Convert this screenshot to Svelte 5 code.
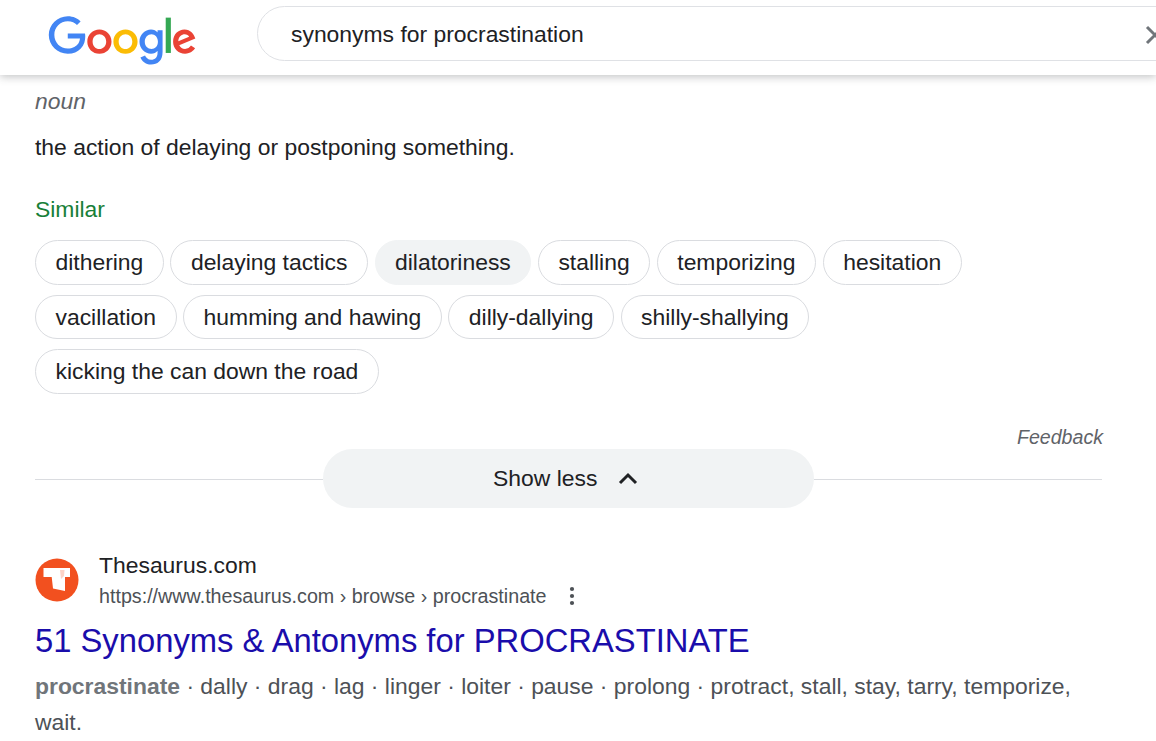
<script>
  const chipRows = [
    ["dithering", "delaying tactics", "dilatoriness", "stalling", "temporizing", "hesitation"],
    ["vacillation", "humming and hawing", "dilly-dallying", "shilly-shallying"],
    ["kicking the can down the road"],
  ];
  const active = "dilatoriness";
</script>

<header class="topbar">
  <svg class="logo" viewBox="0 0 272 92" aria-label="Google">
    <path fill="#EA4335" d="M115.75 47.18c0 12.77-9.99 22.18-22.25 22.18s-22.25-9.41-22.25-22.18C71.25 34.32 81.24 25 93.5 25s22.25 9.32 22.25 22.18zm-9.74 0c0-7.98-5.79-13.44-12.51-13.44S80.99 39.2 80.99 47.18c0 7.9 5.79 13.44 12.51 13.44s12.51-5.55 12.51-13.44z"/>
    <path fill="#FBBC05" d="M163.75 47.18c0 12.77-9.99 22.18-22.25 22.18s-22.25-9.41-22.25-22.18c0-12.85 9.99-22.18 22.25-22.18s22.25 9.32 22.25 22.18zm-9.74 0c0-7.98-5.79-13.44-12.51-13.44s-12.51 5.46-12.51 13.44c0 7.9 5.79 13.44 12.51 13.44s12.51-5.55 12.51-13.44z"/>
    <path fill="#4285F4" d="M209.75 26.34v39.82c0 16.38-9.66 23.07-21.08 23.07-10.75 0-17.22-7.19-19.66-13.07l8.48-3.53c1.51 3.61 5.21 7.87 11.17 7.87 7.31 0 11.84-4.51 11.84-13v-3.19h-.34c-2.18 2.69-6.38 5.04-11.68 5.04-11.09 0-21.25-9.66-21.25-22.09 0-12.52 10.16-22.26 21.25-22.26 5.29 0 9.49 2.35 11.68 4.96h.34v-3.61h9.25zm-8.56 20.92c0-7.81-5.21-13.52-11.84-13.52-6.72 0-12.35 5.71-12.35 13.52 0 7.73 5.63 13.36 12.35 13.36 6.63 0 11.84-5.63 11.84-13.36z"/>
    <path fill="#34A853" d="M225 3v65h-9.5V3h9.5z"/>
    <path fill="#EA4335" d="M262.02 54.48l7.56 5.04c-2.44 3.61-8.32 9.83-18.48 9.83-12.6 0-22.01-9.74-22.01-22.18 0-13.19 9.49-22.18 20.92-22.18 11.51 0 17.14 9.16 18.98 14.11l1.01 2.52-29.65 12.28c2.27 4.45 5.8 6.72 10.75 6.72 4.96 0 8.4-2.44 10.92-6.14zm-23.27-7.98l19.82-8.23c-1.09-2.77-4.37-4.7-8.23-4.7-4.95 0-11.84 4.37-11.59 12.93z"/>
    <path fill="#4285F4" d="M35.29 41.41V32H67c.31 1.64.47 3.58.47 5.68 0 7.06-1.93 15.79-8.15 22.01-6.05 6.3-13.78 9.66-24.02 9.66C16.32 69.35.36 53.89.36 34.91.36 15.93 16.32.47 35.3.47c10.5 0 17.98 4.12 23.6 9.49l-6.64 6.64c-4.03-3.78-9.49-6.72-16.97-6.72-13.86 0-24.7 11.17-24.7 25.03 0 13.86 10.84 25.03 24.7 25.03 8.99 0 14.11-3.61 17.39-6.89 2.66-2.66 4.41-6.46 5.1-11.65l-22.49.01z"/>
  </svg>
  <div class="search">
    <span class="query">synonyms for procrastination</span>
    <svg class="clear" viewBox="0 0 24 24"><path d="M4 4l16 16M20 4L4 20" /></svg>
  </div>
</header>

<main>
  <div class="pos">noun</div>
  <p class="definition">the action of delaying or postponing something.</p>
  <div class="similar">Similar</div>
  <div class="chips">
    {#each chipRows as row}
      <div class="chip-row">
        {#each row as chip}
          <span class="chip" class:active={chip === active}>{chip}</span>
        {/each}
      </div>
    {/each}
  </div>
  <div class="feedback">Feedback</div>
  <div class="divider">
    <span class="line"></span>
    <div class="toggle">
      <span>Show less</span>
      <svg viewBox="0 0 24 24"><path d="M4 16l8-8 8 8" /></svg>
    </div>
    <span class="line"></span>
  </div>

  <div class="result">
    <div class="source">
      <svg class="favicon" viewBox="0 0 44 44">
        <circle cx="22" cy="22" r="21.5" fill="#f2501f" />
        <path fill="#fff" d="M8.5 10H35v9h-5v14l-12-2.5L16.7 19H8.5z" />
        <path fill="#f2501f" opacity="0.25" d="M25 12h4.5l-.5 6-3 3z" />
      </svg>
      <div class="source-text">
        <div class="site">Thesaurus.com</div>
        <div class="url">
          <span>https://www.thesaurus.com › browse › procrastinate</span>
          <svg class="more" viewBox="0 0 6 20"><circle cx="3" cy="3" r="2.1" /><circle cx="3" cy="10" r="2.1" /><circle cx="3" cy="17" r="2.1" /></svg>
        </div>
      </div>
    </div>
    <h3>51 Synonyms &amp; Antonyms for PROCRASTINATE</h3>
    <p class="snippet"><b>procrastinate</b> · dally · drag · lag · linger · loiter · pause · prolong · protract, stall, stay, tarry, temporize, wait.</p>
  </div>
</main>

<style>
  :global(body) {
    overflow: hidden;
    background: #fff;
    font-family: "Liberation Sans", Arial, sans-serif;
    height: 741px;
  }

  .topbar {
    display: flex;
    align-items: center;
    height: 75px;
    padding-left: 48px;
    overflow: hidden;
    box-shadow: 0 2px 8px rgba(60, 64, 67, 0.3);
    position: relative;
  }

  .logo {
    flex: none;
    width: 149px;
    height: 50px;
    margin-top: 6px;
  }

  .search {
    flex: none;
    display: flex;
    align-items: center;
    justify-content: space-between;
    box-sizing: border-box;
    width: 1000px;
    height: 55px;
    margin-left: 60px;
    margin-top: -8px;
    padding: 2px 0 0 33px;
    border: 1px solid #dfe1e5;
    border-radius: 28px;
  }

  .query {
    font-size: 22.9px;
    color: #202124;
  }

  .clear {
    width: 24px;
    height: 24px;
    margin-right: 89px;
    fill: none;
    stroke: #70757a;
    stroke-width: 3;
  }

  main {
    padding: 0 54px 0 35px;
  }

  .pos {
    margin-top: 13px;
    font-size: 22.9px;
    line-height: 26px;
    font-style: italic;
    color: #5f6368;
  }

  .definition {
    margin: 19px 0 0;
    font-size: 22.9px;
    line-height: 28px;
    color: #202124;
  }

  .similar {
    margin-top: 34px;
    font-size: 22.9px;
    line-height: 28px;
    color: #188038;
  }

  .chips {
    display: flex;
    flex-direction: column;
    gap: 10px;
    margin-top: 17px;
  }

  .chip-row {
    display: flex;
    gap: 6.6px;
  }

  .chip {
    box-sizing: border-box;
    height: 44.5px;
    padding: 0 19.5px;
    border: 1px solid #dadce0;
    border-radius: 23px;
    font-size: 22.9px;
    line-height: 42.5px;
    color: #202124;
  }

  .chip.active {
    background: #f1f3f4;
    border-color: #f1f3f4;
  }

  .feedback {
    margin: 31.5px -1px 0 0;
    text-align: right;
    font-size: 19.6px;
    line-height: 24px;
    font-style: italic;
    color: #5f6368;
  }

  .divider {
    display: flex;
    align-items: center;
  }

  .line {
    flex: 1;
    height: 1px;
    margin-top: 1px;
    background: #dadce0;
  }

  .toggle {
    display: flex;
    align-items: center;
    justify-content: center;
    gap: 18.5px;
    width: 491px;
    height: 59px;
    padding-right: 4px;
    box-sizing: border-box;
    border-radius: 30px;
    background: #f1f3f4;
    font-size: 22.9px;
    color: #202124;
  }

  .toggle svg {
    width: 24px;
    height: 24px;
    fill: none;
    stroke: #202124;
    stroke-width: 3;
  }

  .result {
    margin-top: 42px;
  }

  .source {
    display: flex;
    align-items: center;
    gap: 20px;
  }

  .favicon {
    flex: none;
    width: 44px;
    height: 44px;
    margin-top: -2px;
  }

  .site {
    font-size: 22.9px;
    line-height: 30px;
    color: #202124;
  }

  .url {
    display: flex;
    align-items: center;
    margin-top: 1px;
    font-size: 19.7px;
    line-height: 30px;
    color: #4d5156;
  }

  .more {
    width: 6px;
    height: 20px;
    margin-left: 22px;
    fill: #4d5156;
  }

  h3 {
    margin: 10px 0 0;
    font-size: 32.75px;
    line-height: 40px;
    font-weight: 400;
    color: #1a0dab;
  }

  .snippet {
    margin: 7px 0 0;
    font-size: 22.9px;
    line-height: 36px;
    color: #4d5156;
  }

  .snippet b {
    color: #70757a;
  }
</style>
